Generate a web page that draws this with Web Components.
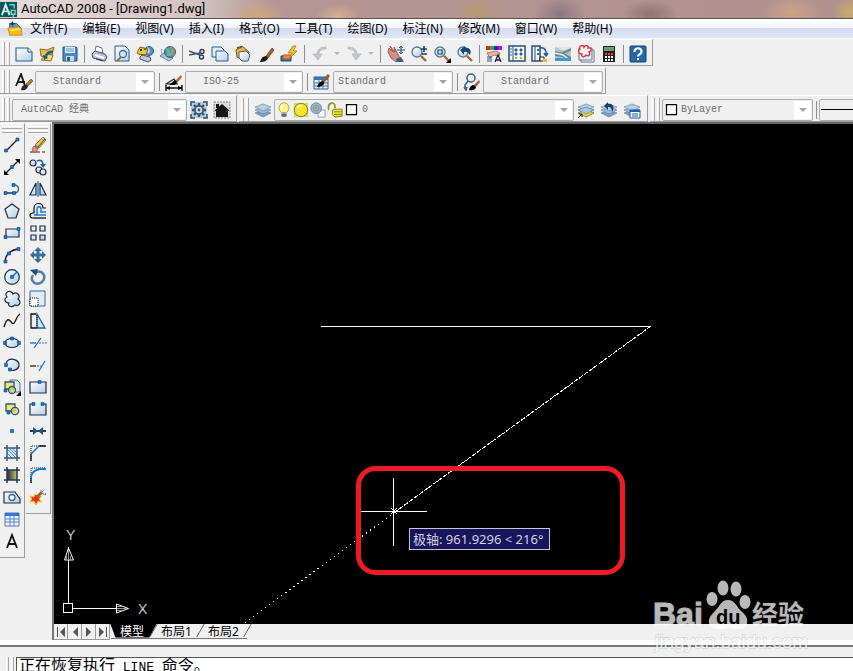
<!DOCTYPE html>
<html lang="zh-CN">
<head>
<meta charset="utf-8">
<title>AutoCAD 2008 - [Drawing1.dwg]</title>
<style>
html, body { margin: 0; height: 100%; }
body { font: 12px/16px "Noto Sans", "Noto Sans CJK SC", sans-serif; color: #000; background: #f0f0f0; overflow: hidden; }
</style>
</head>
<body>
<cad-app></cad-app>
<script>
const define = (name, html, setup) => {
  const tpl = document.createElement('template');
  tpl.innerHTML = html;
  customElements.define(name, class extends HTMLElement {
    constructor() {
      super();
      this.attachShadow({ mode: 'open' }).append(tpl.content.cloneNode(true));
    }
    connectedCallback() { if (setup) setup(this, this.shadowRoot); }
  });
};

const sq = (x, y) => `<path fill="#1478d4" stroke="#0a4a94" stroke-width=".6" d="M${x} ${y}h3v3h-3z"/>`;
const brush = '<path d="M9 11 15 3l2 2-6 8z" fill="#a0612f" stroke="#4a2a14" stroke-width=".6"/><path d="M3 17c1-4 3-6 6-6l2 2c-1 3-4 4-8 4z" fill="#181818"/>';
const lens = '<circle cx="7" cy="7" r="5" fill="url(#g)" stroke="#5b7a96" stroke-width="1.4"/><path d="m11 11 5 5" stroke="#a8642c" stroke-width="2.4"/>';
const layers = '<path d="m1 12 8-3 8 3-8 4z" fill="#7c9fc4" stroke="#5a7ea6" stroke-width=".6"/><path d="m1 9 8-3 8 3-8 4z" fill="#9cbcd8" stroke="#5a7ea6" stroke-width=".6"/><path d="m1 6 8-3 8 3-8 4z" fill="#b8d0e6" stroke="#5a7ea6" stroke-width=".6"/>';
const P = 'fill="none" stroke="#111" stroke-width="1.3"';
const B = 'fill="none" stroke="#1478d4" stroke-width="1.4"';
const F = 'fill="url(#g)" stroke="#1b2c44" stroke-width="1.2"';
const ICONS = {
  app: '<path fill="#0a5658" d="M0 1h18v16H0z"/><path fill="none" stroke="#d8f2ee" stroke-width="2" d="M2 15 6 4l4 11M3 11h7"/><path fill="none" stroke="#7ed4cc" stroke-width="1.4" d="M10 4h5v4M12 10h4v4h-4zM9 12h3M14 14v3"/>',
  dwg: '<path d="M3 3h8l4 4v5H3z" fill="#5c9cd0" stroke="#1c4c7c"/><path d="M1 8c3-2 5 0 8-1s5 0 7 1l1 8H3z" fill="#f8b914" stroke="#b97808" stroke-width=".7"/><path d="M4 11c4-2 7-1 10-2" stroke="#ffe684" fill="none" stroke-width="1.5"/><path d="m6 0 1 2 3 1-3 1-1 3-1-3-3-1 3-1z" fill="#173f68"/>',
  new: '<path d="M1 3h12l4 4v9H1z" fill="url(#g)" stroke="#24608e" stroke-width="1.1"/><path d="M13 3v4h4" fill="#fff" stroke="#24608e"/>',
  open: '<path d="M2 4 9 5l7-3-3 12-10-3z" fill="#e9bc4e" stroke="#8a6b20"/><path d="m3 15 5-6 7 1-2 6z" fill="#f7d878" stroke="#8a6b20"/><path d="M15 6C10 5 8 8 7 11l-2-1 1 5 4-2-1-1c1-3 3-4 6-4z" fill="#1e5a8c"/>',
  save: '<path d="M2 2h13l1 1v13H2z" fill="#4b88bf" stroke="#1d5386"/><path d="M4 2h10v6H4z" fill="#dcebf7"/><path d="M5 4h8M5 6h8" stroke="#6b95bb"/><path d="M5 11h8v5H5z" fill="#c7d9e8"/><path d="M6 12h3v4H6z" fill="#295f92"/>',
  print: '<path d="m5 7 1-6 6 2 1 5z" fill="#fff" stroke="#6d7690"/><path d="m2 9 3-3 10 3 2 3-2 4-12-3z" fill="#b9bdd6" stroke="#464f6c"/><path d="m5 10 9 3" stroke="#fff" stroke-width="2"/><path d="m6 14 7 2" stroke="#30364a"/>',
  preview: '<path d="M2 1h10l4 4v11H2z" fill="url(#g)" stroke="#24608e"/><circle cx="10" cy="9" r="3.5" fill="#d5e9f8" stroke="#416d95" stroke-width="1.3"/><path d="m8 12-4 4" stroke="#a8642c" stroke-width="2"/>',
  publish: '<circle cx="13" cy="6" r="4.5" fill="#4e94c9" stroke="#2b6191"/><path d="M11 3q3 2 1 5" stroke="#d5e6f2" stroke-width="2" fill="none"/><path d="m1 8 3-6 8 2-2 6-8-1z" fill="#f2c634" stroke="#78601c"/><path d="m4 12 2-2 8 2 1 3-3 2-8-3z" fill="#c4c8da" stroke="#464f6c"/><path d="m4 4 2 2m0-2L4 6m4-2 2 1" stroke="#333"/>',
  dwf: '<path d="m1 11 9 5 4-3-9-5z" fill="#bac9d8" stroke="#6b7e92"/><circle cx="11" cy="7" r="5.5" fill="#4298d2" stroke="#1c5b91"/><path d="M7 4q4 0 2 6 5 0 4-5" stroke="#76bd61" fill="none" stroke-width="2"/><path d="M5 12c-3-4-3-6-2-8" stroke="#8aa" fill="none"/><path d="M11 2q5 2 4 9" stroke="#df7a4c" fill="none" stroke-width="1.500"/>',
  cut: '<path d="m1 6 11 4M1 10l11-2" stroke="#405571" stroke-width="1.4"/><circle cx="14" cy="6.5" r="2" fill="none" stroke="#263d5c" stroke-width="1.4"/><circle cx="13.5" cy="12" r="2" fill="none" stroke="#263d5c" stroke-width="1.4"/>',
  copy: '<path d="M1 2h9l3 3v7H1z" fill="#e3eff8" stroke="#24608e"/><path d="M5 6h9l3 3v7H5z" fill="url(#g)" stroke="#24608e"/>',
  paste: '<path d="m2 5 6-4 7 6-4 9-8-4z" fill="#e9b844" stroke="#765215"/><path d="m5 7 7-1 4 4-2 6H8l-3-3z" fill="url(#g)" stroke="#495e79"/><path d="m3 3 5-1" stroke="#635940" stroke-width="2"/>',
  brush,
  edit: '<path d="M1 11h10v5H1z" fill="#2878bf" stroke="#174876"/><path d="M3 10h8v4H3z" fill="#ee8b42" stroke="#b94f19"/><path d="m13 1-5 7h4l-3 6 8-8h-4l3-5z" fill="#f6c51e" stroke="#93690f" stroke-width=".7"/>',
  undo: '<path d="M15 2C9 2 6 5 6 9H2l5 6 4-6H8c0-3 2-5 7-5z" fill="#c2c5c9" stroke="#a8abaf" stroke-width=".6"/>',
  redo: '<path d="M3 2c6 0 9 3 9 7h4l-5 6-4-6h3c0-3-2-5-7-5z" fill="#c2c5c9" stroke="#a8abaf" stroke-width=".6"/>',
  pan: '<path d="m2 3 4 4-3-6 5 6-1-5 4 7 2 5-4 3-5-4-3-6z" fill="#d58e82" stroke="#85453d" stroke-width=".8"/><path d="m9 14 5-2 3 5h-7z" fill="#365f91"/><path d="M14 1v8M10 5h8" stroke="#31577d" stroke-width="1.2"/><path d="m12 3 2-2 2 2M12 7l2 2 2-2" fill="none" stroke="#31577d"/>',
  zoomrt: lens + '<path d="M14 1v6M11 4h6M12 9h5" stroke="#163c66" stroke-width="1.5"/>',
  zoomwin: lens + '<path d="M5 5h4v4H5z" fill="#dceaf5" stroke="#173c65" stroke-width="1.2"/><path d="M18 13v5h-5z"/>',
  zoomprev: lens + '<path d="M14 10c2-5-1-8-5-7V1L4 5l4 5V7c3-1 4 0 6 3z" fill="#164777"/>',
  props: '<path d="M1 1h4v4H1z" fill="#e22"/><path d="M5 1h4v4H5z" fill="#2b2"/><path d="M9 1h4v4H9z" fill="#22d"/><path d="M13 1h4v4h-4z" fill="#d0c"/><path d="m2 8 9-2 4 2-1 3-5-1-4 3z" fill="#efb0a0" stroke="#925148" stroke-width=".7"/><path d="M2 12h5m-5 2h5m-5 2h5" stroke="#2a5b86"/><path d="m10 17 3-7 3 7m-5-2h4" fill="none" stroke="#222" stroke-width="1.3"/>',
  center: '<path d="M1 1h16v15H1z" fill="#f4f8fc" stroke="#234e7e" stroke-width="1.5"/><path d="M5 1v15" stroke="#234e7e"/><path d="M7 4h2v2H7zm5 0h2v2h-2zM7 8h2v2H7zm5 0h2v2h-2z" fill="#336fa9" stroke="#234e7e" stroke-width=".8"/><path d="M7 12h2v2H7zm5 0h2v2h-2z" fill="#d8a919"/><path d="M2 4h2M2 7h2m-2 3h2" stroke="#3472a7"/>',
  palettes: '<path d="M1 1h8v15H1z" fill="#f4f8fc" stroke="#234e7e" stroke-width="1.5"/><path d="M4 1v15" stroke="#234e7e"/><path d="M6 4h2v2H6zm0 4h2v2H6z" fill="#336fa9"/><path d="M9 3c5-1 7 3 6 8M13 8l2 3 2-3" fill="none" stroke="#255b8e" stroke-width="1.5"/><path d="M9 12h4v4H9z" fill="#fff" stroke="#222"/><path d="M12 14h4v3h-4z" fill="#e5c12c"/>',
  sheet: '<path d="M1 2h16v14H1z" fill="#b6c4cb"/><path d="M1 2h16v5L8 5z" fill="#dbe8ea"/><path d="m1 6 9 2 7 4v4l-9-4-7-1z" fill="#5f8b97"/><path d="m17 3-9 4 1 2 8-3z" fill="#6d8d96"/><path d="m1 8 8 2 8 6" stroke="#e8eff0" fill="none" stroke-width="1.5"/><path d="M1 13h16v3H1z" fill="#3f9bc6"/>',
  markup: '<path d="M4 5h13v12H4z" fill="#fff" stroke="#60758c"/><path d="M2 3h13v12H2z" fill="#e5eef7" stroke="#60758c"/><path d="M3 4c-2-4 4-4 4-2 2-3 5-1 4 1 4-1 4 3 1 4 2 3-1 5-3 3-2 3-5 2-4-1-4 0-4-4-2-5z" fill="#fff5f5" stroke="#db3434" stroke-width="1.4"/>',
  calc: '<path d="M3 1h12v16H3z" fill="#211f23"/><path d="M4 2h10v4H4z" fill="#729b74"/><path d="M5 8h2v2H5zm3 0h2v2H8zm3 0h2v2h-2z" fill="#e23b35"/><path d="M5 11h2v2H5zm3 0h2v2H8zm3 0h2v2h-2zM5 14h2v2H5zm3 0h2v2H8zm3 0h2v2h-2z" fill="#fff"/>',
  help: '<rect x="1" y="1" width="16" height="16" rx="1" fill="#2469a3" stroke="#173e6c"/><path d="M5.500 7C5 2 13 2 12.500 7c0 2-3.500 2-3.500 4.500" fill="none" stroke="#fff" stroke-width="2.200"/><path d="M8 13h2v2H8z" fill="#fff"/>',
  textstyle: '<path d="m1 13 5-12 4 12M3 9h7" fill="none" stroke="#111" stroke-width="1.8"/><path d="m11 11 5-5 2 2-5 5z" fill="#b97b45" stroke="#57371d" stroke-width=".6"/><path d="M6 17q1-6 6-5l1 1q-1 5-7 4z" fill="#242424"/>',
  dimstyle: '<path d="m1 11 8-5 3 5z" fill="#f4f4f4" stroke="#222" stroke-width="1.2"/><path d="M1 12v6m16-6v6M1 15h16" stroke="#111" stroke-width="1.4"/><path d="m1 15 4-2v4zm16 0-4-2v4z"/><path d="m10 8 6-6 1 2-5 6z" fill="#a7693e"/><path d="m4 12 6-5 2 2-2 3z"/>',
  tablestyle: '<path d="M1 4h14v12H1z" fill="#e4f0fb" stroke="#315f99"/><path d="M1 4h14v3H1z" fill="#3c70ae"/><path d="M1 10h14M1 13h14M6 4v12m4-12v12" stroke="#4a75a7"/><path d="m8 8 7-7 2 2-6 7z" fill="#9b5c34"/><path d="M4 14q2-6 6-6l1 2q-1 4-7 4z"/>',
  leaderstyle: '<circle cx="8" cy="5" r="4" fill="#eef5fa" stroke="#315c89" stroke-width="1.5"/><path d="m5 8-3 4v4m-1-2 2 3 1-3" stroke="#315c89" fill="none" stroke-width="1.5"/><path d="m11 12 5-5 1 2-4 5z" fill="#a7693e"/><path d="M6 17q1-5 5-5l2 2q-1 4-7 3z"/>',
  gear: '<path d="M1 1h16v16H1z" fill="#bacbdb"/><path d="M1 5V1h4m8 0h4v4m0 8v4h-4m-8 0H1v-4" fill="none" stroke="#244e77" stroke-width="1.500"/><path d="M9 2v14M2 9h14M4 4l10 10M14 4 4 14" stroke="#315675" stroke-width="2.400"/><circle cx="9" cy="9" r="4.200" fill="#d4dde5" stroke="#315675" stroke-width="1.800"/><circle cx="9" cy="9" r="1.400" fill="#315675"/>',
  home: '<path d="M1 1h16v16H1z" fill="#dadada" stroke="#888" stroke-dasharray="2 1"/><path d="M2 9 9 3l7 6v1h-1v6H3v-6H2zM3 3h3v4H3z" fill="#181818"/>',
  layers,
  bulb: '<path d="M6 12C1 7 4 1 9 1s8 6 3 11z" fill="#fbf28a" stroke="#a69d2d"/><path d="M6 13h6v3l-2 1H8l-2-1z" fill="#4d6f9c"/><path d="M7 4 6 8" stroke="#fff" stroke-width="2"/>',
  sun: '<path d="M1 1h16v16H1z" fill="#cbd86c"/><circle cx="9" cy="9" r="7.500" fill="#f8e52b" stroke="#6d7c18"/><path d="M5 7q1-3 5-3" stroke="#fffaa8" fill="none" stroke-width="2"/>',
  freeze: '<path d="M9 9h8v8H9z" fill="#f8fafc" stroke="#8499b2"/><circle cx="7" cy="7" r="6" fill="#9fb7d0" stroke="#5d7fa5"/><circle cx="7" cy="7" r="3" fill="#c8c876" stroke="#7490a5"/><path d="M7 1v12M1 7h12M3 3l8 8m0-8-8 8" stroke="#83a0bd" stroke-width=".7"/>',
  lock: '<path d="M2 9C0 0 9-1 9 5v2" fill="none" stroke="#91992a" stroke-width="2"/><path d="M8 8h9v8l-8 1-3-3V9z" fill="#e8df2f" stroke="#7c8016"/><path d="M8 11h9m-9 3h9" stroke="#8a8d24"/>',
  swatch: '<path d="M3 3h12v12H3z" fill="#fff" stroke="#000" stroke-width="1.5"/>',
  layercur: layers + '<path d="m1 12 8-3 8 3-8 4z" fill="#e8d73c" stroke="#8e8626" stroke-width=".7"/><path d="m1 9 8-3 8 3-8 4z" fill="#abc6dc" stroke="#61809c" stroke-width=".7"/><path d="m1 17 4-4m-3 0h3v3" stroke="#123" fill="none"/>',
  layerprev: layers + '<path d="M12 11c3-5 1-9-4-8V1L4 5l4 4V6c3 0 4 2 4 5z" fill="#1b3e72"/>',
  layerstate: layers + '<path d="M7 9h10v8H7z" fill="#f5faff" stroke="#1d62a8"/><path d="M7 9h10v2H7z" fill="#1d62a8"/><path d="M9 13h6m-6 2h6" stroke="#1d62a8"/>',
  line: `<path ${P} d="M4 14 14 4"/>${sq(1.5,13)}${sq(13,2)}`,
  xline: `<path ${P} d="M3 15 15 3"/><path d="M1 17v-5l5 5zM17 1v5l-5-5z"/>${sq(7.5,7.5)}`,
  pline: `<path ${P} d="M3 13h8"/><path d="M11 13c6 0 6-8 0-8" fill="none" stroke="#567" stroke-width="1.500"/>${sq(1,11.5)}${sq(9.5,11.5)}${sq(9,3.5)}`,
  polygon: `<path ${F} d="m9 2 7 5-3 9H5L2 7z"/>`,
  rect: `<path ${F} d="M3 5h13v8H3z"/>${sq(1,11.500)}${sq(14,3.5)}`,
  arc: `<path ${P} d="M2 15Q3 5 15 3"/>${sq(1,14)}${sq(4.5,6)}${sq(14,1.5)}`,
  circle: `<circle ${F} cx="9" cy="9" r="7.300"/><path d="m9 9 5-5" stroke="#1478d4" stroke-width="1.500"/>${sq(7.5,7.5)}`,
  cloud: `<path ${F} d="M4 7C0 2 8-1 10 4c4-3 8 2 5 5 4 3 1 8-3 6-3 3-8 1-6-2-5 0-5-5-2-6z"/>`,
  spline: `<path ${P} d="M1 15C4 5 6 7 9 11c3 3 4-7 8-9"/>`,
  ellipse: `<ellipse ${F} cx="9" cy="9" rx="7" ry="4.500"/>${sq(0.500,7.500)}${sq(14.500,7.500)}${sq(7.500,3)}`,
  earc: `<path ${F} d="M3 7c4-7 14-3 13 3-1 4-7 6-10 3"/>${sq(1.5,7.500)}${sq(5.500,12)}`,
  insert: '<path d="M7 2h7l3 3v9H7z" fill="#dce9f5" stroke="#4a7097"/><path d="M2 4h9v7H2z" fill="#f4e66d" stroke="#2c557c" stroke-width="1.300"/><circle cx="9" cy="12" r="3.500" fill="#e9db67" fill-opacity=".8" stroke="#2c557c" stroke-width="1.300"/><path d="M18 13v5h-5z"/>' + sq(1,11),
  block: '<path d="M3 4h9v7H3z" fill="#f4e66d" stroke="#2c557c" stroke-width="1.300"/><circle cx="12" cy="11" r="3.700" fill="#e9db67" fill-opacity=".8" stroke="#2c557c" stroke-width="1.300"/>' + sq(4,11),
  point: sq(7.500,7.500),
  hatch: `<path d="M4 4h10v10H4z" fill="#dbe8f3"/><path d="m4 5 9 9M4 9l5 5M9 4l5 5M6 4l8 8" stroke="#4e87b9"/><path d="M4 1v16M14 1v16M1 4h16M1 14h16" stroke="#315b82" stroke-width="1.500"/>`,
  gradient: `<path d="M4 4h10v10H4z" fill="url(#k)"/><path d="M4 1v16M14 1v16M1 4h16M1 14h16" stroke="#253950" stroke-width="1.500"/>`,
  region: `<path ${F} d="M1 4h11l5 7v4H1z"/><circle cx="9" cy="9.500" r="3" fill="#f4f8fb" stroke="#2f689d" stroke-width="1.300"/>`,
  table: '<path d="M2 3h14v13H2z" fill="#eef5fc" stroke="#5276ac"/><path d="M2 3h14v3H2z" fill="#3476dc"/><path d="M2 9h14M2 12h14M7 6v10m4-10v10" stroke="#5b83bb"/>',
  mtext: '<path d="m4 16 5-13 5 13M6 12h6" fill="none" stroke="#111" stroke-width="1.800"/>',
  erase: '<path d="M1 16h10m2 0h3" stroke="#222"/><path d="m6 9 8-8 3 3-7 8z" fill="#e8c144" stroke="#6b6043" stroke-width=".800"/><path d="m9 11 7-8" stroke="#5a4a20" stroke-width="1"/><path d="m7 9 3 3-2 2-4-3z" fill="#3f87b8"/><path d="m5 10 4 3-2 3H4l-1-3z" fill="#e99082" stroke="#b24c42" stroke-width=".8"/>',
  copyobj: `<circle ${F} cx="4" cy="5" r="3"/><circle ${F} cx="10" cy="12" r="3"/><circle ${F} cx="14" cy="14" r="3"/><path d="M8 3c4-2 6 0 6 4" fill="none" stroke="#225f9e" stroke-width="1.600"/><path d="M11 6h6l-3 4z" fill="#225f9e"/>`,
  mirror: `<path ${F} d="M7 3v12H1zm4 0v12h6z"/><path d="M9 1v16" stroke="#1478d4" stroke-width="1.300"/>`,
  offset: `<path fill="#e4eef8" stroke="#111" stroke-width="1.200" d="M4 16c-4 0-4-5 0-5h1V6c0-6 9-6 9 0h3"/><path ${P} d="M4 16h13"/><path ${B} d="M17 13H5m3 0V7c0-3 4-3 4 0v3h5"/>`,
  array: `<path ${F} d="M2 2h5v5H2zm9 0h5v5h-5zM2 11h5v5H2zm9 0h5v5h-5z"/>`,
  move: '<path d="m9 1 4 4h-2.500v2.500H13V5l4 4-4 4v-2.500h-2.500V13H13l-4 4-4-4h2.500v-2.500H5V13L1 9l4-4v2.500h2.500V5H5z" fill="#386d9d"/>',
  rotate: '<path d="M7 4C14 2 18 9 13 14 8 18 0 14 4 7" fill="none" stroke="#527ea8" stroke-width="2.500"/><path d="m1 2 8-1-2 7z" fill="#1f4d79"/>',
  scale: `<path d="M1 1h15v15H1z" fill="#e1ebf4" stroke="#366997"/><path d="M1 8h8v8H1z" fill="#fff" stroke="#111" stroke-dasharray="1 1"/>`,
  stretch: `<path d="M7 2H2v14h6" ${P}/><path d="M8 2v14h8z" fill="#d7e7f5" stroke="#1b60a0" stroke-width="1.300"/><path d="M8 3v13" stroke="#111" stroke-dasharray="1 1"/>`,
  trim: `<path d="M1 9h6" stroke="#1b60a0" stroke-width="1.200"/><path d="M10 9h8" stroke="#1478d4" stroke-dasharray="2 1"/><path d="m5 14 7-10" stroke="#1478d4" stroke-width="1.300"/>`,
  extend: `<path d="M1 10h6" stroke="#111" stroke-width="1.200"/><path d="M8 10h4" stroke="#1478d4" stroke-dasharray="2 1"/><path d="m10 15 6-10" stroke="#1478d4" stroke-width="1.300"/>`,
  breakpt: `<path d="M1 4h16v11H1z" ${F}/>${sq(9,2.500)}`,
  breaks: `<path d="M4 4H1v11h16V4h-3" ${F}/>${sq(3,2.500)}${sq(12,2.500)}`,
  join: '<path d="M1 9h16" stroke="#223f5b" stroke-width="2"/><path d="m4 5 5 4-5 4zM14 5 9 9l5 4z" fill="#294f70"/>',
  chamfer: `<path d="M2 17V2h15" fill="none" stroke="#111" stroke-dasharray="1 1"/><path ${P} d="M2 17v-7m8-8h7"/><path ${B} d="m2 10 8-8"/>`,
  fillet: `<path d="M2 17V2h15" fill="none" stroke="#111" stroke-dasharray="1 1"/><path ${P} d="M2 17v-5"/><path fill="none" stroke="#1478d4" stroke-width="1.800" d="M2 12c0-5 3-8 9-9h6"/>`,
  explode: '<path d="m1 8 4 1 1-3 3 3 4-1-3 3 3 3-4-1-2 4-2-4-4 1 2-3z" fill="#e72b1d" stroke="#f8bd22"/><path d="m8 9 5-5" stroke="#9b6421" stroke-width="3"/><path d="m13 4 3-3m-2 5h3M12 2v2m4 2 1 2" stroke="#555" stroke-dasharray="1 1"/>'
};

define('cad-icon', `<style>
:host { display: inline-flex; width: 18px; height: 18px; flex: none; }
svg { width: 100%; height: 100%; }
</style>
<svg viewBox="0 0 18 18" aria-hidden="true"></svg>`, (el, root) => {
  if (!ICONS[el.getAttribute('name')]) return;
  root.querySelector('svg').innerHTML = `<defs>
  <linearGradient id="g" x2="1" y2="1"><stop stop-color="#fff"/><stop offset="1" stop-color="#b4cee4"/></linearGradient>
  <linearGradient id="k" x2="1"><stop stop-color="#1c2848"/><stop offset="1" stop-color="#d3c463"/></linearGradient>
  </defs>` + ICONS[el.getAttribute('name')];
});

define('tool-button', `<style>
:host { display: flex; flex: none; width: 23px; height: 22px; }
button { all: unset; flex: 1; display: grid; place-items: center; }
</style><button type="button"></button>`, (el, root) => {
  const button = root.querySelector('button');
  button.setAttribute('aria-label', el.getAttribute('name'));
  const icon = document.createElement('cad-icon');
  icon.setAttribute('name', el.getAttribute('name'));
  button.replaceChildren(icon);
});

define('drop-arrow', `<style>
:host { display: flex; width: 11px; height: 22px; flex: none; }
button { all: unset; flex: 1; display: grid; place-items: center; }
i { border: 3px solid transparent; border-top-color: #b4b4b4; border-bottom: 0; }
</style><button type="button" aria-label="更多"><i></i></button>`);

define('bar-split', `<style>
:host { display: flex; justify-content: center; width: 6px; height: 18px; flex: none; }
:host([wide]) { width: 8px; }
i { width: 1px; background: #8e8e8e; }
</style><i></i>`);

define('tool-bar', `<style>
:host { display: flex; align-items: center; box-sizing: border-box; height: 27px; flex: none; padding-top: 2px;
  border: solid #9c9c9c; border-width: 1px 1px 1px 0; border-top-color: #fff; background: #f0f0f0; }
:host([grow]) { flex: 1; min-width: 0; border-right: 0; overflow: hidden; }
:host([vertical]) { flex-direction: column; width: 25px; height: auto; padding: 0 0 5px; }
.grip { display: flex; gap: 2px; padding: 0 2px 0 2px; align-self: stretch; flex: none; }
.grip i { width: 1px; border: solid #fff; border-width: 0 1px 0 1px; border-right-color: #a8a8a8; }
:host([vertical]) .grip { flex-direction: column; padding: 2px 2px 1px; gap: 1px; }
:host([vertical]) .grip i { width: auto; height: 1px; border: solid #fff; border-width: 1px 0; border-bottom-color: #a8a8a8; }
</style><span class="grip"><i></i><i></i></span><slot></slot>`);

define('combo-box', `<style>
:host { display: flex; align-items: center; box-sizing: border-box; height: 22px; flex: none; overflow: hidden;
  border: 1px solid #adadad; border-radius: 2px; background: #f0f0f0; padding: 1px; }
select { appearance: none; flex: 1; min-width: 0; height: 100%; border: 0; margin: 0; padding: 0 0 0 var(--indent, 4px);
  background: none; color: #6d6d6d; font: 10px/18px "Liberation Mono", "Noto Sans CJK SC", monospace; outline: 0; }
.arrow { display: grid; place-items: center; align-self: stretch; width: 17px; background: #fff; }
.arrow i { border: 4px solid transparent; border-top-color: #a4a4a4; border-bottom: 0; }
</style><slot></slot><select><option></option></select><span class="arrow"><i></i></span>`, (el, root) => {
  root.querySelector('select').setAttribute('aria-label', el.getAttribute('label'));
  root.querySelector('option').textContent = el.getAttribute('value') || '';
});

define('title-bar', `<style>
:host { display: flex; align-items: center; gap: 4px; height: 18px; flex: none; border-bottom: 1px solid #5c5052; font: 13px/16px Roboto, sans-serif;
  background:
    radial-gradient(22px 12px at 338px 16px, #d3b08f, transparent),
    radial-gradient(28px 14px at 258px 14px, #cfa67c, transparent),
    radial-gradient(22px 14px at 478px 12px, #b49a6c, transparent),
    radial-gradient(26px 18px at 560px 14px, #8d7880, transparent),
    radial-gradient(28px 14px at 650px 14px, #8e7571, transparent),
    radial-gradient(30px 16px at 792px 12px, #cda583, transparent),
    radial-gradient(18px 16px at 850px 12px, #c9ac68, transparent),
    linear-gradient(90deg, #e4dada, #d4c3c1 200px, #b49794 270px, #b09190); }
h1 { margin: 0; font: inherit; }
cad-icon { width: 17px; height: 17px; }
</style><cad-icon name="app"></cad-icon><h1><slot></slot></h1>`);

define('menu-bar', `<style>
:host { display: flex; align-items: center; height: 19px; flex: none; padding-left: 7px; border-bottom: 1px solid #f8f8f8;
  background: linear-gradient(#fff, #f2f4fb 45%, #d5dbee 50%, #e2e7f5); }
nav { display: flex; gap: 15px; padding-left: 7px; }
button { all: unset; white-space: nowrap; }
cad-icon { width: 16px; height: 16px; }
</style><cad-icon name="dwg"></cad-icon><nav></nav>`, (el, root) => {
  root.querySelector('nav').innerHTML = el.getAttribute('items').split(',').map(t => `<button type="button">${t}</button>`).join('');
});

define('dynamic-tip', `<style>
:host { display: block; box-sizing: border-box; border: 1px solid #c4c4dc; background: #18155a; color: #d2d2e6;
  font: 13px/20px "Noto Sans", "Noto Sans CJK SC", sans-serif; padding: 0 6px 0 3px; white-space: nowrap; }
</style><slot></slot>`);

define('site-mark', `<style>
:host { display: block; opacity: .72; color: #fff; width: 152px; height: 72px; }
svg { display: block; width: 100%; height: 100%; overflow: visible; }
</style>
<svg viewBox="0 0 152 72" fill="#fff" aria-label="Baidu">
<ellipse cx="57" cy="21" rx="5.500" ry="7"/><ellipse cx="68" cy="10" rx="5.500" ry="7.500"/><ellipse cx="81" cy="11" rx="5.500" ry="7.500"/><ellipse cx="90" cy="24" rx="5.500" ry="7"/>
<path d="M73 22c7 0 8 6 13 11 5 4 7 8 6 12-1 8-9 6-18 5-9 1-18 3-20-5-1-4 2-8 6-12 5-5 6-11 13-11z"/>
<text x="-2" y="47" font-family="Liberation Sans" font-weight="700" font-size="32" stroke="#fff" stroke-width="1">Bai</text>
<text x="61" y="46" font-family="Liberation Sans" font-weight="700" font-size="20" fill="#000">du</text>
<text x="97" y="46" font-family="Noto Sans CJK SC" font-weight="700" font-size="26">经验</text>
<text x="0" y="70" font-family="Liberation Sans" font-size="19" stroke="#000" stroke-opacity=".12" stroke-width="2" paint-order="stroke">jingyan.baidu.com</text>
</svg>`);

define('drawing-view', `<style>
:host { display: block; position: relative; flex: 1; min-height: 0; background: #000; overflow: hidden; }
.model { position: absolute; inset: 0; width: 100%; height: 100%; }
.ucs { position: absolute; left: 0; bottom: 0; width: 110px; height: 110px; }
dynamic-tip { position: absolute; left: 355px; top: 404px; }
</style>
<svg class="model" fill="none" stroke="#fff" shape-rendering="crispEdges">
<path d="M267 202.500H597"/>
<path d="M597 202 341 388" stroke-dasharray="5 1"/>
<path d="M341 388 189 500" stroke-dasharray="1 4"/>
<path d="M339.500 354v68M307 387.500h66"/>
<path d="m337 384 6 6m0-6-6 6"/>
<rect x="304.500" y="344.500" width="264" height="104" rx="17" stroke="#ed1c24" stroke-width="5" shape-rendering="auto"/>
</svg>
<svg class="ucs" viewBox="0 0 110 110" fill="none" stroke="#fff">
<path d="M9.500 89.500h9v9h-9zM14.500 89V33M19 94.500h55" shape-rendering="crispEdges"/>
<path d="m14.500 34-4 12h9zM62.500 90v9l12-4.500z"/>
<path d="M14.500 36v10m-2-4v4m4-4v4M63 94.500h10m-10-2h5m-5 4h5" stroke="#999"/>
<text x="12" y="26" font-family="Liberation Sans" font-size="14" fill="#ccc" stroke="none">Y</text>
<text x="84" y="100" font-family="Liberation Sans" font-size="14" fill="#ccc" stroke="none">X</text>
</svg>
<dynamic-tip>极轴: 961.9296 &lt; 216°</dynamic-tip>`);

define('layout-tabs', `<style>
:host { display: flex; height: 16px; flex: none; background: #f0f0f0; }
button { all: unset; box-sizing: border-box; }
.nav { width: 14px; display: grid; place-items: center; border: solid #999; border-width: 0 1px 1px 0; }
.nav svg { width: 10px; height: 10px; fill: #555; }
.tabs { display: flex; margin-left: 1px; }
.tab { position: relative; height: 15px; padding: 0 8px; font-size: 12px; line-height: 15px; white-space: nowrap; border-bottom: 1px solid #777; }
.tab svg { position: absolute; inset: 0; width: 100%; height: 100%; overflow: visible; }
.tab span { position: relative; }
.tab.on { color: #fff; padding: 0 9px; }
.tab path { fill: #f0f0f0; stroke: #666; vector-effect: non-scaling-stroke; }
.tab.on path { fill: #000; stroke: #000; }
</style>
<button class="nav" type="button" aria-label="首个"><svg viewBox="0 0 10 10"><path d="M1 0h1v10H1zM9 0v10L4 5z"/></svg></button>
<button class="nav" type="button" aria-label="上一个"><svg viewBox="0 0 10 10"><path d="M8 0v10L3 5z"/></svg></button>
<button class="nav" type="button" aria-label="下一个"><svg viewBox="0 0 10 10"><path d="M2 0v10l5-5z"/></svg></button>
<button class="nav" type="button" aria-label="末个"><svg viewBox="0 0 10 10"><path d="M8 0h1v10H8zM1 0v10l5-5z"/></svg></button>
<div class="tabs" role="tablist">
<button class="tab on" role="tab"><svg viewBox="0 0 44 15" preserveAspectRatio="none"><path d="M0 0h47l-7 14H5z"/></svg><span>模型</span></button>
<button class="tab" role="tab"><svg viewBox="0 0 44 15" preserveAspectRatio="none"><path d="M4 0h44l-7 14H-3z" style="stroke:none"/><path d="m48 0-7 14M4 0l-7 14" style="fill:none"/></svg><span>布局1</span></button>
<button class="tab" role="tab"><svg viewBox="0 0 44 15" preserveAspectRatio="none"><path d="m48 0-7 14"/></svg><span>布局2</span></button>
</div>`);

define('command-line', `<style>
:host { display: flex; height: 14px; flex: none; border-top: 2px solid #777; padding-top: 10px; }
.grip { display: flex; gap: 2px; padding: 0 2px 0 6px; }
.grip i { width: 1px; border-left: 1px solid #fff; border-right: 1px solid #a8a8a8; }
output { flex: 1; border: solid #555; border-width: 1px 0 0 1px; background: #fff; padding-left: 2px;
  font: 16px/13px "Noto Sans CJK SC", sans-serif; white-space: pre; }
span { font: 13px/13px "Liberation Mono", monospace; }
</style><span class="grip"><i></i><i></i></span><output>正在恢复执行<span> LINE </span>命令。</output>`);

const btns = s => s.split(' ').map(n =>
  n === '|' ? '<bar-split></bar-split>' : n === '||' ? '<bar-split wide></bar-split>' :
  n === 'v' ? '<drop-arrow></drop-arrow>' : `<tool-button name="${n}"></tool-button>`).join('');

define('cad-app', `<style>
:host { display: flex; flex-direction: column; height: 100vh; position: relative; overflow: hidden; }
.rows { display: flex; flex-direction: column; gap: 1px; flex: none; }
.row { display: flex; gap: 2px; }
combo-box.w { width: 120px; --indent: 16px; margin-right: 1px; }
.work { display: flex; flex: 1; min-height: 0; }
.docks { display: flex; gap: 1px; align-items: flex-start; padding: 1px 1px 0 0; flex: none; }
.pane { flex: 1; min-width: 0; display: flex; flex-direction: column; border: solid #777; border-width: 2px 0 0 2px; border-top-color: #666; }
.rail { height: 5px; flex: none; background: #fff; }
.line { flex: 1; height: 1px; background: #000; min-width: 20px; }
.lay cad-icon { width: 16px; height: 16px; margin-right: 1px; }
combo-box cad-icon.sw { width: 15px; height: 15px; margin: 0; }
site-mark { position: absolute; right: 46px; bottom: 21px; }
</style>
<title-bar>AutoCAD 2008 - [Drawing1.dwg]</title-bar>
<menu-bar items="文件(F),编辑(E),视图(V),插入(I),格式(O),工具(T),绘图(D),标注(N),修改(M),窗口(W),帮助(H)"></menu-bar>
<div class="rows">
<div class="row"><tool-bar>
${btns('new open save | print preview publish dwf | cut copy paste brush edit || undo v redo v || pan zoomrt zoomwin zoomprev | props center palettes sheet markup calc | help')}<span style="width:3px"></span>
</tool-bar></div>
<div class="row"><tool-bar>
${btns('textstyle')}<combo-box class="w" label="文字样式" value="Standard"></combo-box>${btns('| dimstyle')}<combo-box class="w" style="width:118px" label="标注样式" value="ISO-25"></combo-box>${btns('| tablestyle')}<combo-box class="w" style="--indent:3px" label="表格样式" value="Standard"></combo-box>${btns('| leaderstyle')}<combo-box class="w" label="多重引线样式" value="Standard"></combo-box><span style="width:1px"></span>
</tool-bar></div>
<div class="row"><tool-bar>
<combo-box style="width:175px;--indent:7px" label="工作空间" value="AutoCAD 经典"></combo-box>${btns('gear home')}<span style="width:3px"></span>
</tool-bar><tool-bar>
${btns('layers')}<combo-box class="lay" style="width:300px;--indent:3px" label="图层" value="0"><cad-icon name="bulb"></cad-icon><cad-icon name="sun"></cad-icon><cad-icon name="freeze"></cad-icon><cad-icon name="lock"></cad-icon><cad-icon class="sw" name="swatch"></cad-icon></combo-box>${btns('layercur layerprev layerstate')}<span style="width:4px"></span>
</tool-bar><tool-bar grow>
<combo-box style="width:151px;--indent:2px" label="颜色" value="ByLayer"><cad-icon class="sw" name="swatch"></cad-icon></combo-box><bar-split></bar-split><combo-box style="width:151px" label="线型"><span class="line"></span></combo-box>
</tool-bar></div>
</div>
<div class="work">
<div class="docks">
<tool-bar vertical>${btns('line xline pline polygon rect arc circle cloud spline ellipse earc insert block point hatch gradient region table mtext')}</tool-bar>
<tool-bar vertical>${btns('erase copyobj mirror offset array move rotate scale stretch trim extend breakpt breaks join chamfer fillet explode')}</tool-bar>
</div>
<div class="pane"><drawing-view></drawing-view><layout-tabs></layout-tabs></div>
</div>
<div class="rail"></div>
<command-line></command-line>
<site-mark></site-mark>`);
</script>
</body>
</html>
